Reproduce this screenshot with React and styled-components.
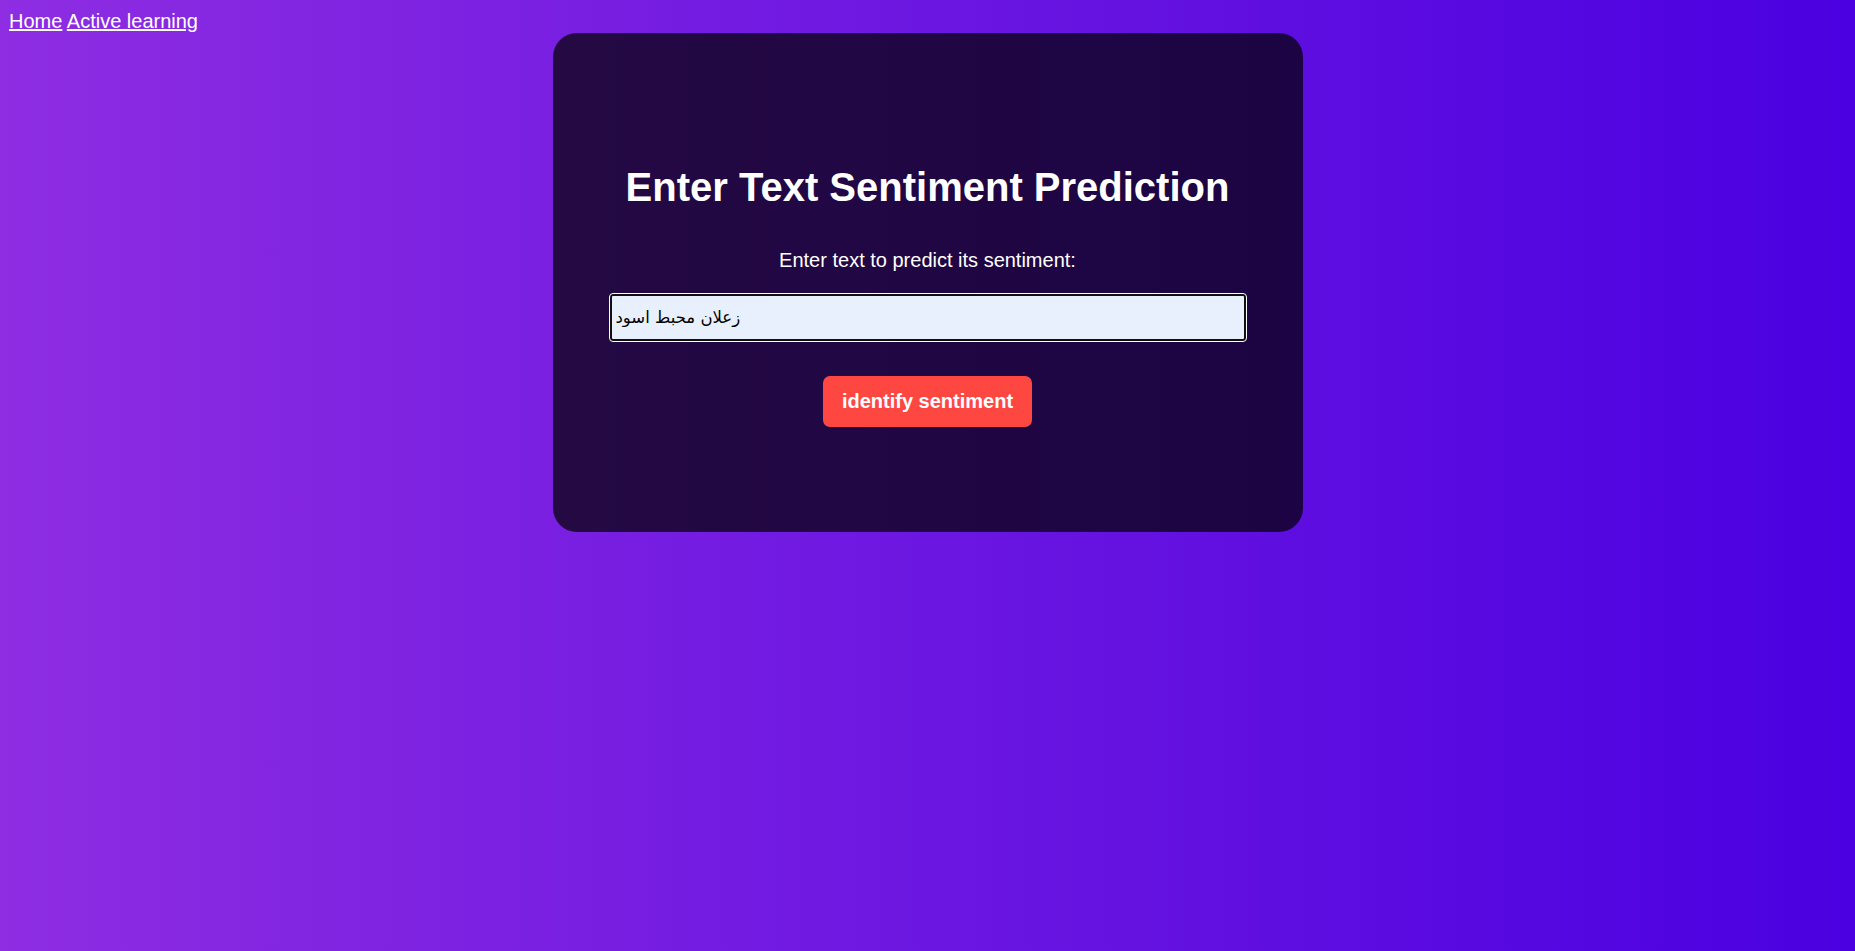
import React from 'react';
import styled, { createGlobalStyle } from 'styled-components';

const GlobalStyle = createGlobalStyle`
    html {
        min-height: 100vh;
        background: linear-gradient(to right, #8e2de2, #4a00e0);
    }
    body {
        margin: 8px;
        font-family: "Liberation Sans", Arial, sans-serif;
    }
`

function App() {
    return <>
        <GlobalStyle />
        <Nav>
            <a href="#home">Home</a> <a href="#active">Active learning</a>
        </Nav>
        <Card>
            <h1>Enter Text Sentiment Prediction</h1>
            <label htmlFor="text">Enter text to predict its sentiment:</label>
            <TextInput id="text" type="text" defaultValue="زعلان محبط اسود" />
            <Button type="button">identify sentiment</Button>
        </Card>
    </>
}

const Nav = styled.nav`
    font-size: 20px;
    line-height: 23px;
    padding-top: 2px;
    padding-left: 1px;
    a {
        color: #ffffff;
        text-decoration: underline;
    }
`

const Card = styled.div`
    width: 750px;
    height: 499px;
    box-sizing: border-box;
    margin: 0 auto;
    padding-top: 134px;
    background-color: rgba(0, 0, 0, 0.7);
    border-radius: 24px;
    display: flex;
    flex-direction: column;
    align-items: center;
    color: #ffffff;
    h1 {
        margin: 0;
        font-size: 40px;
        line-height: 40px;
        font-weight: bold;
    }
    label {
        margin-top: 42px;
        font-size: 20px;
        line-height: 23px;
    }
`

const TextInput = styled.input`
    margin-top: 22px;
    width: 636px;
    height: 47px;
    box-sizing: border-box;
    padding: 0 4px;
    background-color: #e8f0fe;
    border: 2px solid #101010;
    border-radius: 3px;
    outline: 1px solid #ffffff;
    font-family: "DejaVu Sans", "Liberation Sans", sans-serif;
    font-size: 16.5px;
    color: #000000;
`

const Button = styled.button`
    margin-top: 35px;
    padding: 15px 19px;
    border: none;
    border-radius: 7px;
    background-color: #ff4742;
    color: #ffffff;
    font-family: "Liberation Sans", Arial, sans-serif;
    font-size: 20px;
    line-height: 21px;
    font-weight: bold;
    cursor: pointer;
`

export default App;
